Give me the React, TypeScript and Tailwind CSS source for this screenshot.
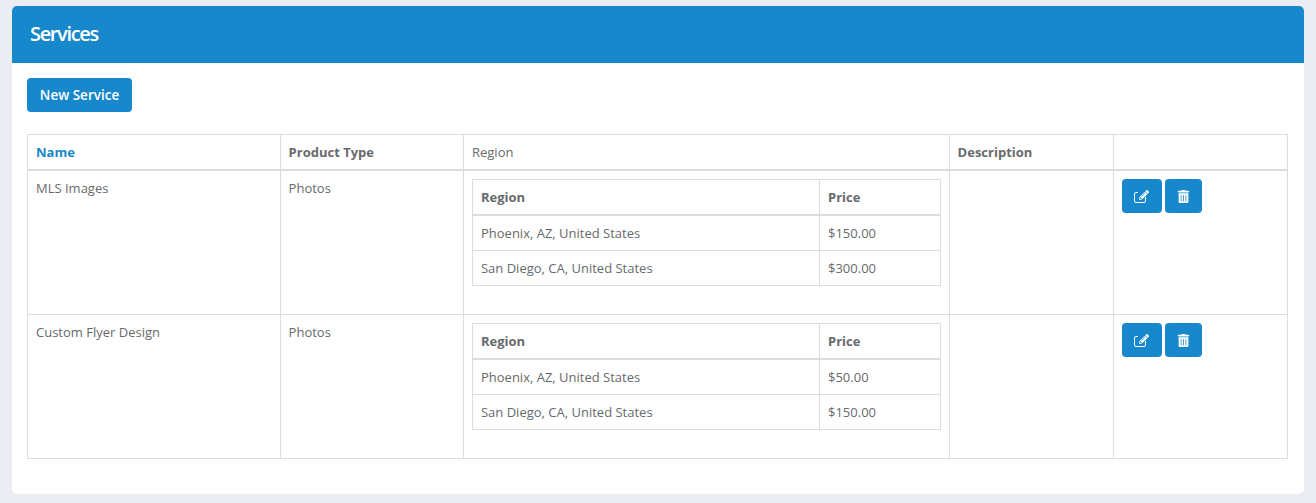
import { FaPencilAlt, FaTrashAlt } from "react-icons/fa";

const cell = "border border-[#ddd] p-2 align-top";
const head = "border border-[#ddd] border-b-2 p-2 align-bottom text-left";

function EditIcon() {
  return (
    <span className="relative block h-[13px] w-[15px]">
      <span className="absolute bottom-0 left-0 h-[11px] w-[12px] rounded-[2px] border border-white" />
      <span className="absolute right-[3px] top-0 block h-[7px] w-[8px] bg-[#1688cb]" />
      <FaPencilAlt className="absolute right-0 top-0 h-[10px] w-[10px]" />
    </span>
  );
}

function Inner({ rows }: { rows: [string, string][] }) {
  return (
    <table className="mb-5 w-full table-fixed border-collapse">
      <thead>
        <tr>
          <th className={head}>Region</th>
          <th className={`${head} w-[120.6px]`}>Price</th>
        </tr>
      </thead>
      <tbody>
        {rows.map(([r, p]) => (
          <tr key={r}>
            <td className={cell}>{r}</td>
            <td className={cell}>{p}</td>
          </tr>
        ))}
      </tbody>
    </table>
  );
}

function Row({ name, rows }: { name: string; rows: [string, string][] }) {
  return (
    <tr>
      <td className={cell}>{name}</td>
      <td className={cell}>Photos</td>
      <td className={cell}>
        <Inner rows={rows} />
      </td>
      <td className={cell}></td>
      <td className={cell}>
        <div className="flex gap-[3px]">
          <button className="flex h-[34px] w-10 items-center justify-center rounded-[4px] bg-[#1688cb] text-white">
            <EditIcon />
          </button>
          <button className="flex h-[34px] w-[37px] items-center justify-center rounded-[4px] bg-[#1688cb] text-white">
            <FaTrashAlt className="h-[13px] w-[13px]" />
          </button>
        </div>
      </td>
    </tr>
  );
}

export default function App() {
  return (
    <div className="min-h-screen bg-[#ecedf2] px-3 pt-1.5 font-['Open_Sans',sans-serif] text-[13px] leading-[18px] text-[#676a6c]">
      <div className="h-[488px] rounded-[5px] bg-white">
        <div className="flex h-[57px] items-center rounded-t-[5px] bg-[#1688cb] px-[18px] pb-[2px] text-[20px] font-semibold tracking-[-1.35px] text-white">
          Services
        </div>
        <div className="pl-[15px] pr-4 pt-[15px]">
          <button className="mb-[22px] block h-[34px] w-[105px] rounded-[4px] bg-[#1688cb] text-[13.5px] font-semibold text-white">
            New Service
          </button>
          <table className="w-full table-fixed border-collapse">
            <thead>
              <tr>
                <th className={`${head} w-[252.6px] text-[#1688cb]`}>Name</th>
                <th className={`${head} w-[183.4px]`}>Product Type</th>
                <th className={`${head} w-[485.6px] font-normal`}>Region</th>
                <th className={`${head} w-[164px]`}>Description</th>
                <th className={head}></th>
              </tr>
            </thead>
            <tbody>
              <Row
                name="MLS Images"
                rows={[
                  ["Phoenix, AZ, United States", "$150.00"],
                  ["San Diego, CA, United States", "$300.00"],
                ]}
              />
              <Row
                name="Custom Flyer Design"
                rows={[
                  ["Phoenix, AZ, United States", "$50.00"],
                  ["San Diego, CA, United States", "$150.00"],
                ]}
              />
            </tbody>
          </table>
        </div>
      </div>
    </div>
  );
}
